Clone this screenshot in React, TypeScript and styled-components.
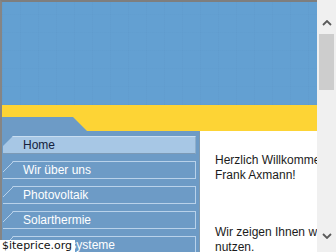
import styled, { createGlobalStyle } from "styled-components"

const GlobalStyle = createGlobalStyle`
  html, body {
    margin: 0;
    padding: 0;
    overflow: hidden;
    background: #ffffff;
  }
  body {
    font-family: "Liberation Sans", Arial, sans-serif;
  }
`

const Frame = styled.div`
  position: relative;
  display: flex;
  width: 336px;
  height: 252px;
  overflow: hidden;
`

const Page = styled.div`
  display: flex;
  flex-direction: column;
  width: 317px;
  height: 252px;
  box-sizing: border-box;
  border-top: 2px solid #7e7e7e;
  border-left: 2px solid #858585;
  overflow: hidden;
`

const Header = styled.div`
  flex: 0 0 103px;
  background-color: #63a0d2;
  background-image:
    repeating-linear-gradient(90deg, rgba(80, 130, 180, 0.08) 0 1px, transparent 1px 18px),
    repeating-linear-gradient(0deg, rgba(80, 130, 180, 0.06) 0 1px, transparent 1px 18px);
`

const Band = styled.div`
  display: flex;
  flex: 0 0 26px;
  background: #fdd435;
`

const Body = styled.div`
  display: flex;
  flex: 1;
  min-height: 0;
`

const Nav = styled.nav`
  display: flex;
  flex-direction: column;
  gap: 7px;
  width: 198px;
  flex-shrink: 0;
  box-sizing: border-box;
  padding: 5px 3px 0 1px;
  background: #6d9bc6;
  border-right: 1px solid #7f98ad;
`

const NavItem = styled.div<{ $active?: boolean }>`
  flex: 0 0 18px;
  box-sizing: border-box;
  display: flex;
  align-items: center;
  padding-left: 20px;
  font-size: 12px;
  line-height: 16px;
  white-space: nowrap;
  color: ${(p) => (p.$active ? "#14213d" : "#ffffff")};
  background-color: ${(p) => (p.$active ? "#a7c7e5" : "transparent")};
  border-top: 1px solid ${(p) => (p.$active ? "#c9def1" : "#b9d2ea")};
  border-bottom: 1px solid ${(p) => (p.$active ? "#7c9ab6" : "#b9d2ea")};
  border-right: 1px solid ${(p) => (p.$active ? "#8eaecb" : "#b9d2ea")};
  background-image: ${(p) =>
    p.$active
      ? "none"
      : "linear-gradient(135deg, transparent calc(50% - 0.6px), #b9d2ea calc(50% - 0.6px), #b9d2ea calc(50% + 0.6px), transparent calc(50% + 0.6px))"};
  background-size: 11px 11px;
  background-repeat: no-repeat;
  background-origin: border-box;
  background-clip: border-box;
  clip-path: polygon(10px 0, 100% 0, 100% 100%, 0 100%, 0 10px);
`

const Content = styled.main`
  flex: 1;
  min-width: 0;
  background: #ffffff;
  padding: 22px 0 0 15px;
  overflow: hidden;
  white-space: nowrap;
  color: #1b1b1b;
  font-size: 12px;
  line-height: 15px;
`

const Para = styled.p<{ $gap?: number }>`
  margin: 0 0 ${(p) => p.$gap ?? 0}px 0;
`

const Scrollbar = styled.div`
  display: flex;
  flex-direction: column;
  align-items: center;
  width: 19px;
  height: 252px;
  background: #f0f0f0;
`

const Arrow = styled.div<{ $top: number }>`
  display: flex;
  justify-content: center;
  margin-top: ${(p) => p.$top}px;
  height: 6px;
`

const Thumb = styled.div`
  width: 15px;
  height: 56px;
  margin-top: 8px;
  background: #cdcdcd;
`

const Watermark = styled.div`
  position: absolute;
  left: 0;
  bottom: 0;
  padding: 0 3px 0 2px;
  background: #ffffff;
  color: #111111;
  font-family: "DejaVu Sans", sans-serif;
  font-size: 11px;
  line-height: 12px;
`

function Chevron({ down }: { down?: boolean }) {
  return (
    <svg width="10" height="6" viewBox="0 0 10 6">
      <polyline
        points={down ? "1,1 5,5 9,1" : "1,5 5,1 9,5"}
        fill="none"
        stroke="#5a5a5a"
        strokeWidth="1.8"
      />
    </svg>
  )
}

const items = ["Home", "Wir über uns", "Photovoltaik", "Solarthermie", "Speichersysteme"]

export default function App() {
  return (
    <>
      <GlobalStyle />
      <Frame>
        <Page>
          <Header />
          <Band>
            <svg width="86" height="26" viewBox="0 0 86 26">
              <polygon points="0,12 71,12 85,26 0,26" fill="#6d9bc6" />
            </svg>
          </Band>
          <Body>
            <Nav>
              {items.map((label, i) => (
                <NavItem key={label} $active={i === 0}>
                  {label}
                </NavItem>
              ))}
            </Nav>
            <Content>
              <Para>Herzlich Willkommen bei</Para>
              <Para $gap={42}>Frank Axmann!</Para>
              <Para>Wir zeigen Ihnen wie Sie die Sonne</Para>
              <Para>nutzen.</Para>
            </Content>
          </Body>
        </Page>
        <Scrollbar>
          <Arrow $top={20}>
            <Chevron />
          </Arrow>
          <Thumb />
          <Arrow $top={143}>
            <Chevron down />
          </Arrow>
        </Scrollbar>
        <Watermark>$iteprice.org</Watermark>
      </Frame>
    </>
  )
}
